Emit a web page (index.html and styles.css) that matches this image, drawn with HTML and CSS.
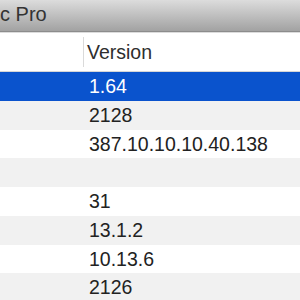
FILE: index.html
```html
<!doctype html>
<html>
  <head>
    <meta name="viewport" content="width=device-width, initial-scale=1.0" />
    <title>c Pro</title>
    <link rel="stylesheet" href="styles.css">
  </head>
  <body>
    <div class="titlebar">c Pro</div>

    <div class="table">
      <div class="header">
        <div class="col-name"></div>
        <div class="col-version">Version</div>
      </div>

      <div class="row selected"><div class="col-name"></div><div class="col-value">1.64</div></div>
      <div class="row"><div class="col-name"></div><div class="col-value">2128</div></div>
      <div class="row"><div class="col-name"></div><div class="col-value">387.10.10.10.40.138</div></div>
      <div class="row"><div class="col-name"></div><div class="col-value"></div></div>
      <div class="row"><div class="col-name"></div><div class="col-value">31</div></div>
      <div class="row"><div class="col-name"></div><div class="col-value">13.1.2</div></div>
      <div class="row"><div class="col-name"></div><div class="col-value">10.13.6</div></div>
      <div class="row"><div class="col-name"></div><div class="col-value">2126</div></div>
    </div>
  </body>
</html>
```

FILE: styles.css
```css
html,
body {
  margin: 0;
  height: 100%;
  overflow: hidden;
  background: #fff;
  font-family: 'Liberation Sans', Arial, sans-serif;
  font-size: 19.5px;
  color: #222;
}

.titlebar {
  height: 31px;
  line-height: 29px;
  font-size: 20px;
  border-bottom: 1px solid #8c8c8c;
  background: linear-gradient(#dcdcdc, #a2a2a2);
  color: #333;
  white-space: nowrap;
  overflow: hidden;
}

.header {
  display: grid;
  grid-template-columns: 83px 1fr;
  height: 38px;
  border-top: 1px solid #dcdcdc;
  border-bottom: 1px solid #d6d6d6;
  align-items: center;
}

.header .col-version {
  border-left: 1px solid #dadada;
  height: 30px;
  line-height: 30px;
  padding-left: 3px;
  color: #2e2e2e;
}

.row {
  display: grid;
  grid-template-columns: 83px 1fr;
  height: 28.75px;
  line-height: 28.75px;
}

.row:nth-child(odd) {
  background: #f1f1f1;
}

.row .col-value {
  padding-left: 6px;
  white-space: nowrap;
}

.row.selected {
  background: #0a53cd;
  color: #fff;
}
```
